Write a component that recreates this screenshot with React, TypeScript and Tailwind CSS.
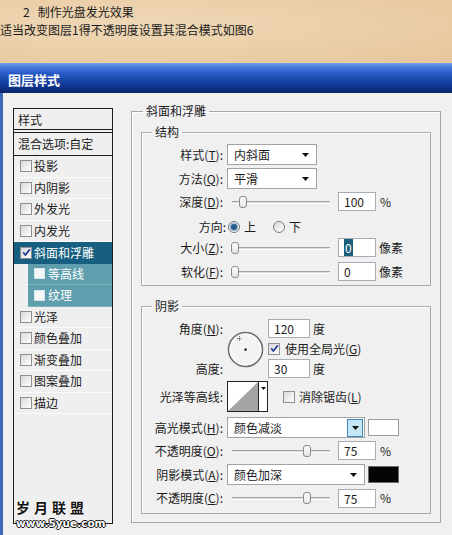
import React from "react";

const cjk = "font-['Noto_Sans_CJK_SC','Noto_Sans',sans-serif]";

function Check({ checked = false, light = false }: { checked?: boolean; light?: boolean }) {
  return (
    <span
      className={
        light
          ? "flex h-[11px] w-[11px] shrink-0 items-center justify-center border border-[#d9e8ec] bg-[#f4f7f8]"
          : "flex h-[12px] w-[12px] shrink-0 items-center justify-center border border-[#8e8f8f] bg-[linear-gradient(135deg,#d8d8d8,#ffffff)]"
      }
    >
      {checked && (
        <svg width="9" height="9" viewBox="0 0 9 9">
          <path d="M1.2 4.4 L3.4 7 L7.8 1.4" fill="none" stroke="#1f3d94" strokeWidth="1.7" />
        </svg>
      )}
    </span>
  );
}

function Radio({ checked = false }: { checked?: boolean }) {
  return (
    <span className="flex h-[12px] w-[12px] items-center justify-center rounded-full border border-[#7c7c7c] bg-[linear-gradient(135deg,#dadada,#ffffff)]">
      {checked && <span className="h-[6px] w-[6px] rounded-full bg-[#2a5d8c] shadow-[0_0_0_1px_#8fb6d8]" />}
    </span>
  );
}

function Arrow() {
  return (
    <svg width="7" height="4" viewBox="0 0 7 4">
      <path d="M0 0 H7 L3.5 4 Z" fill="#111" />
    </svg>
  );
}

function Select({ value, w, hot = false }: { value: string; w: string; hot?: boolean }) {
  return (
    <div className={`${w} flex h-[21px] items-center justify-between border border-[#a3a3a3] bg-white pl-[6px]`}>
      <span className="leading-[19px]">{value}</span>
      {hot ? (
        <span className="mr-[1px] flex h-[18px] w-[16px] items-center justify-center border border-[#3f86b8] bg-[#c6e6f6]">
          <Arrow />
        </span>
      ) : (
        <span className="mr-[7px] flex items-center">
          <Arrow />
        </span>
      )}
    </div>
  );
}

function Slider({ thumb }: { thumb: string }) {
  return (
    <div className="relative h-[14px] w-[100px]">
      <div className="absolute left-[2px] right-0 top-[6px] h-[3px] border-t border-[#a2a2a2] border-b border-b-white bg-[#dcdcdc]" />
      <div className={`absolute top-[1px] ${thumb} h-[12px] w-[8px] rounded-[3px] border border-[#8a8a8a] bg-[linear-gradient(to_bottom,#ffffff,#e4e4e4)]`} />
    </div>
  );
}

function NumInput({ children, w = "w-[38px]" }: { children: React.ReactNode; w?: string }) {
  return (
    <div className={`${w} h-[19px] border border-[#a7adb5] bg-white pl-[5px] text-[12px] leading-[17px]`}>
      {children}
    </div>
  );
}

function Label({ children }: { children: React.ReactNode }) {
  return <div className="w-[85px] shrink-0 pr-[4px] text-right whitespace-nowrap">{children}</div>;
}

function Dial() {
  return (
    <svg width="37" height="37" viewBox="0 0 37 37">
      <circle cx="18.5" cy="18.5" r="17" fill="#f3f3f3" stroke="#6e6e6e" strokeWidth="1.6" />
      <circle cx="18.5" cy="18.5" r="15.6" fill="none" stroke="#ffffff" strokeWidth="0.8" />
      <rect x="17.5" y="17.5" width="2.2" height="2.2" fill="#111" />
      <path d="M12.5 5.3 V10.3 M10 7.8 H15" stroke="#333" strokeWidth="0.9" strokeDasharray="1 0.7" />
    </svg>
  );
}

function Contour() {
  return (
    <div className="flex h-[31px] w-[41px] border border-[#222] bg-white">
      <svg width="30" height="29" viewBox="0 0 30 29" className="block">
        <path d="M0 29 L30 0 L30 29 Z" fill="#a4a4a4" />
      </svg>
      <div className="flex w-[9px] justify-center border-l border-[#222] pt-[5px]">
        <svg width="5" height="3" viewBox="0 0 5 3">
          <path d="M0 0 H5 L2.5 3 Z" fill="#111" />
        </svg>
      </div>
    </div>
  );
}

const items: { label: string; checked?: boolean; selected?: boolean; sub?: boolean }[] = [
  { label: "投影" },
  { label: "内阴影" },
  { label: "外发光" },
  { label: "内发光" },
  { label: "斜面和浮雕", checked: true, selected: true },
  { label: "等高线", sub: true },
  { label: "纹理", sub: true },
  { label: "光泽" },
  { label: "颜色叠加" },
  { label: "渐变叠加" },
  { label: "图案叠加" },
  { label: "描边" },
];

function StyleList() {
  return (
    <div className="mt-[15px] flex h-[416px] w-[100px] shrink-0 flex-col border border-[#1c1c1c] bg-[#efefef]">
      <div className="h-[21px] border-b border-[#1c1c1c] pl-[4px] leading-[21px]">样式</div>
      <div className="mt-[2px] h-[24px] border-y border-[#1c1c1c] pl-[4px] leading-[22px] whitespace-nowrap">
        混合选项:自定
      </div>
      {items.map((it) =>
        it.sub ? (
          <div key={it.label} className="flex h-[21.5px] pl-[14px]">
            <div className="flex flex-1 items-center gap-[3px] border-b border-[#7fb3bf] bg-[#5e9ead] pl-[6px] text-white">
              <Check light />
              <span>{it.label}</span>
            </div>
          </div>
        ) : (
          <div
            key={it.label}
            className={`flex h-[21.5px] items-center gap-[2px] pl-[6px] ${
              it.selected ? "bg-[#175f80] text-white" : "border-b border-[#fbfbfb]"
            }`}
          >
            <Check checked={it.checked} />
            <span>{it.label}</span>
          </div>
        )
      )}
    </div>
  );
}

export default function App() {
  return (
    <div className={`${cjk} relative h-[535px] w-[452px] overflow-hidden bg-[#e9cda6] text-[12px] text-[#1c1c1c]`}>
      <div className="h-[63px] bg-[radial-gradient(ellipse_at_30%_40%,#efd8b6,#e6c69c)] pt-[3px] leading-[18px]">
        <div className="pl-[23px]">
          2<span className="ml-[8px]">制作光盘发光效果</span>
        </div>
        <div>适当改变图层1得不透明度设置其混合模式如图6</div>
      </div>

      <div className="flex h-[30px] items-center bg-[linear-gradient(to_bottom,#78a2ea_0%,#4f83e0_10%,#2c5fcb_30%,#1a48ad_55%,#0d338b_80%,#0a2667_100%)] pl-[8px] pt-[3px] text-[13px] font-bold text-white">
        图层样式
      </div>

      <div className="flex h-[442px] border-l-[3px] border-[#4068b8] bg-[#f0f0f0] pl-[10px]">
        <StyleList />

        <fieldset className="ml-[18px] mt-[10px] h-[420px] w-[310px] shrink-0 border border-[#a6a6a6] shadow-[inset_1px_1px_0_#ffffff]">
          <legend className="ml-[11px] px-[3px] leading-[16px]">斜面和浮雕</legend>

          <fieldset className="mx-[9px] mt-[5px] border border-[#aaaaaa] pb-[3px] shadow-[inset_1px_1px_0_#ffffff]">
            <legend className="ml-[10px] px-[3px] leading-[16px]">结构</legend>

            <div className="mt-[4px] flex h-[21px] items-center">
              <Label>
                样式(<u>T</u>):
              </Label>
              <Select value="内斜面" w="w-[90px]" />
            </div>
            <div className="mt-[3px] flex h-[21px] items-center">
              <Label>
                方法(<u>Q</u>):
              </Label>
              <Select value="平滑" w="w-[90px]" />
            </div>
            <div className="mt-[2px] flex h-[21px] items-center">
              <Label>
                深度(<u>D</u>):
              </Label>
              <div className="ml-[3px]">
                <Slider thumb="left-[9px]" />
              </div>
              <div className="ml-[8px]">
                <NumInput>100</NumInput>
              </div>
              <span className="ml-[4px]">%</span>
            </div>
            <div className="mt-[7px] flex h-[16px] items-center">
              <div className="w-[86px] shrink-0 pr-[2px] text-right">方向:</div>
              <Radio checked />
              <span className="ml-[4px]">上</span>
              <span className="ml-[17px]">
                <Radio />
              </span>
              <span className="ml-[4px]">下</span>
            </div>
            <div className="mt-[2px] flex h-[21px] items-center">
              <Label>
                大小(<u>Z</u>):
              </Label>
              <div className="ml-[3px]">
                <Slider thumb="left-[1px]" />
              </div>
              <div className="ml-[8px]">
                <NumInput>
                  <span className="bg-[#1b5f7d] px-[1px] text-white">0</span>
                </NumInput>
              </div>
              <span className="ml-[3px]">像素</span>
            </div>
            <div className="mt-[3px] flex h-[21px] items-center">
              <Label>
                软化(<u>F</u>):
              </Label>
              <div className="ml-[3px]">
                <Slider thumb="left-[1px]" />
              </div>
              <div className="ml-[8px]">
                <NumInput>0</NumInput>
              </div>
              <span className="ml-[3px]">像素</span>
            </div>
          </fieldset>

          <fieldset className="mx-[9px] mt-[12px] border border-[#aaaaaa] pb-[5px] shadow-[inset_1px_1px_0_#ffffff]">
            <legend className="ml-[10px] px-[3px] leading-[16px]">阴影</legend>

            <div className="mt-[5px] flex">
              <div className="flex w-[85px] shrink-0 flex-col justify-between pr-[4px] text-right">
                <div className="h-[19px] leading-[19px]">
                  角度(<u>N</u>):
                </div>
                <div className="h-[19px] leading-[19px]">高度:</div>
              </div>
              <div className="flex w-[41px] items-center pt-[2px]">
                <Dial />
              </div>
              <div className="flex flex-col">
                <div className="flex items-center">
                  <NumInput w="w-[42px]">120</NumInput>
                  <span className="ml-[3px]">度</span>
                </div>
                <div className="mt-[4px] flex h-[13px] items-center gap-[5px]">
                  <Check checked />
                  <span>
                    使用全局光(<u>G</u>)
                  </span>
                </div>
                <div className="mt-[4px] flex items-center">
                  <NumInput w="w-[42px]">30</NumInput>
                  <span className="ml-[3px]">度</span>
                </div>
              </div>
            </div>

            <div className="mt-[3px] flex items-center">
              <Label>光泽等高线:</Label>
              <Contour />
              <span className="ml-[15px]">
                <Check />
              </span>
              <span className="ml-[4px]">
                消除锯齿(<u>L</u>)
              </span>
            </div>

            <div className="mt-[5px] flex h-[21px] items-center">
              <Label>
                高光模式(<u>H</u>):
              </Label>
              <Select value="颜色减淡" w="w-[138px]" hot />
              <div className="ml-[3px] h-[17px] w-[31px] border border-[#9c9c9c] bg-white" />
            </div>
            <div className="mt-[3px] flex h-[19px] items-center">
              <Label>
                不透明度(<u>O</u>):
              </Label>
              <div className="ml-[3px]">
                <Slider thumb="left-[73px]" />
              </div>
              <div className="ml-[8px]">
                <NumInput>75</NumInput>
              </div>
              <span className="ml-[4px]">%</span>
            </div>
            <div className="mt-[4px] flex h-[21px] items-center">
              <Label>
                阴影模式(<u>A</u>):
              </Label>
              <Select value="颜色加深" w="w-[138px]" />
              <div className="ml-[3px] h-[17px] w-[31px] border border-[#6a6a6a] bg-[#050505]" />
            </div>
            <div className="mt-[3px] flex h-[20px] items-center">
              <Label>
                不透明度(<u>C</u>):
              </Label>
              <div className="ml-[3px]">
                <Slider thumb="left-[73px]" />
              </div>
              <div className="ml-[8px]">
                <NumInput>75</NumInput>
              </div>
              <span className="ml-[4px]">%</span>
            </div>
          </fieldset>
        </fieldset>
      </div>

      <div className="absolute left-[16px] top-[499px] flex flex-col">
        <span className="text-[14px] font-bold leading-[16px] tracking-[4px] text-[#111] [text-shadow:0_0_2px_#fff,0_0_2px_#fff]">
          岁月联盟
        </span>
        <span className="mt-[3px] font-['DejaVu_Sans',sans-serif] text-[10.5px] font-bold leading-[10px] text-white [text-shadow:1px_0_0_#111,-1px_0_0_#111,0_1px_0_#111,0_-1px_0_#111]">
          www.5yue.com
        </span>
      </div>
    </div>
  );
}
